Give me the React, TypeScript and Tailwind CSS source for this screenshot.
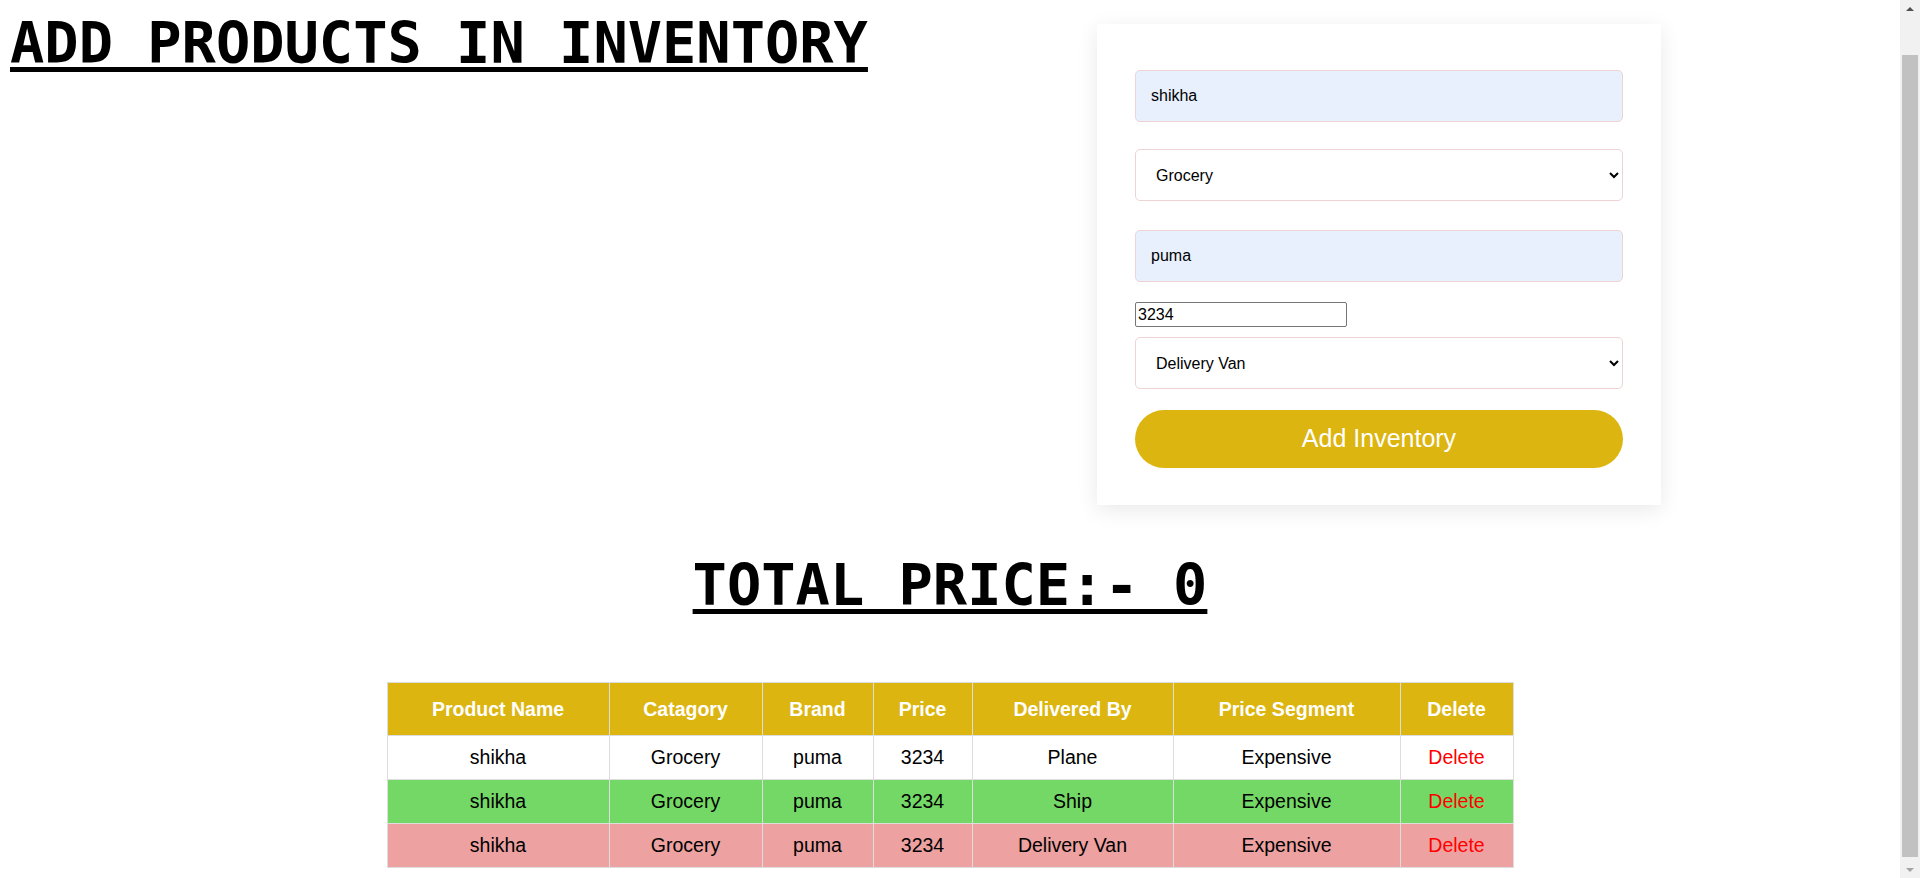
import { useState } from 'react'

type Product = {
  name: string
  category: string
  brand: string
  price: string
  deliveredBy: string
  segment: string
  rowClass: string
}

const initialProducts: Product[] = [
  { name: 'shikha', category: 'Grocery', brand: 'puma', price: '3234', deliveredBy: 'Plane', segment: 'Expensive', rowClass: 'bg-white' },
  { name: 'shikha', category: 'Grocery', brand: 'puma', price: '3234', deliveredBy: 'Ship', segment: 'Expensive', rowClass: 'bg-[#74d867]' },
  { name: 'shikha', category: 'Grocery', brand: 'puma', price: '3234', deliveredBy: 'Delivery Van', segment: 'Expensive', rowClass: 'bg-[#eda1a0]' },
]

export default function App() {
  const [name, setName] = useState('shikha')
  const [category, setCategory] = useState('Grocery')
  const [brand, setBrand] = useState('puma')
  const [price, setPrice] = useState('3234')
  const [deliveredBy, setDeliveredBy] = useState('Delivery Van')
  const [products, setProducts] = useState<Product[]>(initialProducts)

  function addInventory() {
    const rowClass =
      deliveredBy === 'Ship' ? 'bg-[#74d867]' : deliveredBy === 'Delivery Van' ? 'bg-[#eda1a0]' : 'bg-white'
    setProducts([
      ...products,
      { name, category, brand, price, deliveredBy, segment: Number(price) > 1000 ? 'Expensive' : 'Cheap', rowClass },
    ])
  }

  function remove(i: number) {
    setProducts(products.filter((_, idx) => idx !== i))
  }

  const heading = "font-['DejaVu_Sans_Mono',monospace] text-[57px] leading-[66px] font-bold text-black underline decoration-[5px] underline-offset-[4px]"
  const field = 'h-[52px] w-full rounded-[5px] border border-[#efd3d3] text-[16px] text-black outline-none'
  const cell = 'border border-[#dddddd] py-[10px] leading-[23px]'
  const head = 'border border-[#dddddd] py-[15px] font-bold'

  return (
    <div className="flex h-[878px] overflow-hidden bg-white font-['Liberation_Sans',Arial,sans-serif]">
      <div className="min-w-0 flex-1">
        <div className="flex items-start">
          <h1 className={`${heading} mt-[10px] pl-[10px]`}>ADD PRODUCTS IN INVENTORY</h1>

          <div className="ml-auto mr-[239px] mt-[24px] flex w-[564px] flex-col bg-white px-[38px] pt-[46px] pb-[37px] shadow-[0_5px_20px_rgba(0,0,0,0.09)]">
            <input
              value={name}
              onChange={e => setName(e.target.value)}
              className={`${field} bg-[#e8f0fe] pl-[15px]`}
            />
            <select
              value={category}
              onChange={e => setCategory(e.target.value)}
              className={`${field} mt-[27px] bg-white pl-[16px] pr-[10px]`}
            >
              <option>Grocery</option>
              <option>Electronics</option>
              <option>Clothing</option>
            </select>
            <input
              value={brand}
              onChange={e => setBrand(e.target.value)}
              className={`${field} mt-[29px] bg-[#e8f0fe] pl-[15px]`}
            />
            <input
              type="number"
              value={price}
              onChange={e => setPrice(e.target.value)}
              className="mt-[20px] h-[25px] w-[212px] rounded-[2px] border border-[#767676] bg-white px-[2px] text-[16px] text-black [appearance:textfield]"
            />
            <select
              value={deliveredBy}
              onChange={e => setDeliveredBy(e.target.value)}
              className={`${field} mt-[10px] bg-white pl-[16px] pr-[10px]`}
            >
              <option>Plane</option>
              <option>Ship</option>
              <option>Delivery Van</option>
            </select>
            <button
              onClick={addInventory}
              className="mt-[21px] h-[58px] w-full rounded-full bg-[#dcb510] text-[25px] text-white"
            >
              Add Inventory
            </button>
          </div>
        </div>

        <h1 className={`${heading} mt-[47px] text-center`}>TOTAL PRICE:- 0</h1>

        <table className="mx-auto mt-[64px] w-[1126px] table-fixed border-collapse text-[19.5px] leading-[22px]">
          <thead>
            <tr className="bg-[#dcb510] text-white">
              <th className={`${head} w-[222px]`}>Product Name</th>
              <th className={`${head} w-[153px]`}>Catagory</th>
              <th className={`${head} w-[111px]`}>Brand</th>
              <th className={`${head} w-[99px]`}>Price</th>
              <th className={`${head} w-[201px]`}>Delivered By</th>
              <th className={`${head} w-[227px]`}>Price Segment</th>
              <th className={`${head} w-[113px]`}>Delete</th>
            </tr>
          </thead>
          <tbody>
            {products.map((p, i) => (
              <tr key={i} className={`${p.rowClass} text-center text-black`}>
                <td className={cell}>{p.name}</td>
                <td className={cell}>{p.category}</td>
                <td className={cell}>{p.brand}</td>
                <td className={cell}>{p.price}</td>
                <td className={cell}>{p.deliveredBy}</td>
                <td className={cell}>{p.segment}</td>
                <td className={cell}>
                  <span onClick={() => remove(i)} className="cursor-pointer text-[#ff0000]">Delete</span>
                </td>
              </tr>
            ))}
          </tbody>
        </table>
      </div>

      {/* window scrollbar as seen in the shot */}
      <div className="flex w-[20px] shrink-0 flex-col bg-[#f1f1f1]">
        <div className="flex h-[17px] items-center justify-center">
          <div className="h-0 w-0 border-x-[4px] border-b-[4px] border-x-transparent border-b-[#505050]" />
        </div>
        <div className="flex flex-1 flex-col px-[2px] pt-[38px] pb-[4px]">
          <div className="flex-1 bg-[#c1c1c1]" />
        </div>
        <div className="flex h-[17px] items-center justify-center">
          <div className="h-0 w-0 border-x-[4px] border-t-[4px] border-x-transparent border-t-[#a3a3a3]" />
        </div>
      </div>
    </div>
  )
}
